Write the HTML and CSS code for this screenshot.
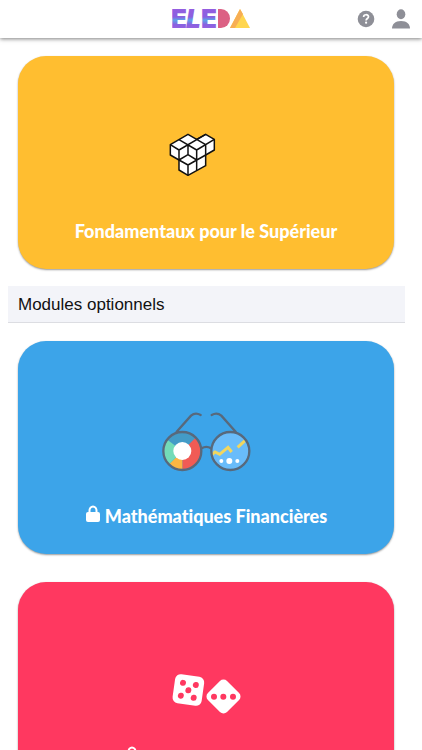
FILE: index.html
```html
<!DOCTYPE html>
<html lang="fr">

<head>
    <meta charset="UTF-8">
    <meta name="viewport" content="width=device-width, initial-scale=1.0">
    <title>Eleda</title>
    <link rel="stylesheet" href="styles.css">
</head>

<body>
    <header class="topbar">
        <a class="logo" href="#" aria-label="Eleda">
            <svg width="78" height="34" viewBox="0 -7 78 34">
                <defs>
                    <linearGradient id="violet" x1="0" y1="0" x2="0" y2="1">
                        <stop offset="0" stop-color="#9b5be0" />
                        <stop offset=".45" stop-color="#8a60e0" />
                        <stop offset=".55" stop-color="#5fa3e8" />
                        <stop offset=".7" stop-color="#8a60e0" />
                        <stop offset="1" stop-color="#a866e0" />
                    </linearGradient>
                </defs>
                <g class="logo-text" fill="url(#violet)">
                    <text x="-1" y="19">E</text>
                    <text x="14" y="19" font-style="italic">L</text>
                    <text x="29" y="19">E</text>
                </g>
                <path fill="#dc6184" d="M46 0h3a9 9.500 0 0 1 0 19h-3z" />
                <path fill="#ffd64f" d="M68 0l10 19H58z" />
                <path fill="#f7ae54" d="M68 0l3 5-8 14h-5z" />
            </svg>
        </a>
        <nav class="actions">
            <button type="button" aria-label="Aide">
                <svg width="18" height="18" viewBox="0 0 18 18">
                    <circle cx="9" cy="9" r="8.300" fill="#8e8f97" />
                    <path d="M6.600 7c0-3 4.900-3 4.900-.2 0 1.700-2.400 1.800-2.400 3.700" fill="none" stroke="#fff" stroke-width="1.700" />
                    <circle cx="9.100" cy="12.700" r="1.100" fill="#fff" />
                </svg>
            </button>
            <button type="button" aria-label="Profil">
                <svg width="18" height="20" viewBox="0 0 18 20">
                    <ellipse cx="9" cy="5.200" rx="4.300" ry="5" fill="#8e8f97" />
                    <path d="M0 19.500c0-4 3-7.500 9-7.500s9 3.500 9 7.500z" fill="#8e8f97" />
                </svg>
            </button>
        </nav>
    </header>

    <main>
        <a class="card yellow" href="#">
            <svg class="picture" viewBox="0 0 90 90">
                <g transform="translate(-6 9) scale(.3333)" stroke="#111" stroke-width="4.500" stroke-linejoin="round">
                    <path fill="#fff" d="M46 74L99 43l26 15 27-15 26 15v32l-26 15v32l-53 29-27-16v-30l-26-15z" />
                    <path fill="none" d="M46 74l26 16 80-47M72 59l53 31 53-32M125 58l27 16v31l-53 30M72 90v30l27-16V74M72 120l27 15v31M99 104l26 16v31M125 90v30" />
                </g>
            </svg>
            <h2>Fondamentaux pour le Supérieur</h2>
        </a>

        <h3 class="section">Modules optionnels</h3>

        <a class="card blue" href="#">
            <svg class="picture" viewBox="0 0 90 90">
                <g transform="translate(-11 4) scale(.3333)">
                    <!-- left lens: ring chart -->
                    <circle cx="97" cy="153" r="55" fill="#439bc7" />
                    <path fill="#f15b55" d="M97 153l39-39a55 55 0 0 1-39 94z" />
                    <path fill="#fbb643" d="M97 153v55a55 55 0 0 1-39-16z" />
                    <path fill="#73dbb8" d="M97 153l-39 39a55 55 0 0 1-5-72z" />
                    <circle cx="97" cy="153" r="27" fill="#fff" />
                    <!-- right lens: curve -->
                    <circle cx="241" cy="153" r="55" fill="#69bcfa" />
                    <path d="M187 163l8-7 14 7 25-21 11 14M263 142l22-20" fill="none" stroke="#f2d65e" stroke-width="9" />
                    <g fill="#fff">
                        <circle cx="214" cy="183" r="6" />
                        <circle cx="238" cy="183" r="9" />
                        <circle cx="262" cy="183" r="6" />
                    </g>
                    <g fill="none" stroke="#58697c" stroke-width="7" stroke-linecap="round">
                        <circle cx="97" cy="153" r="57" />
                        <circle cx="241" cy="153" r="57" />
                        <path d="M155 145q14-9 28 0M80 95l43-48q13-11 29-2M257 95l-43-48q-13-11-29-2" />
                    </g>
                </g>
            </svg>
            <h2>
                <svg class="lock" viewBox="0 0 16 18">
                    <path d="M4.500 8V5.500a3.500 4 0 0 1 7 0V8" fill="none" stroke="#fff" stroke-width="2" />
                    <rect x="1" y="7" width="14" height="10" rx="2" fill="#fff" />
                </svg>
                Mathématiques Financières
            </h2>
        </a>

        <a class="card red" href="#">
            <svg class="picture" viewBox="0 0 90 90">
                <g transform="translate(-6 23) scale(.3333)">
                    <g transform="rotate(8 100 91)">
                        <rect x="56" y="46" width="88" height="88" rx="17" fill="#fff" />
                        <g fill="#ff3860">
                            <circle cx="81" cy="71" r="9" />
                            <circle cx="120" cy="72" r="9" />
                            <circle cx="100" cy="91" r="9" />
                            <circle cx="80" cy="110" r="9" />
                            <circle cx="119" cy="111" r="9" />
                        </g>
                    </g>
                    <rect x="165" y="69" width="81" height="81" rx="15" fill="#fff" transform="rotate(45 205.500 109.500)" />
                    <g fill="#ff3860">
                        <circle cx="177" cy="110" r="9" />
                        <circle cx="205" cy="110" r="9" />
                        <circle cx="234" cy="110" r="9" />
                    </g>
                </g>
            </svg>
            <h2>
                <svg class="lock" viewBox="0 0 16 18">
                    <path d="M4.500 8V5.500a3.500 4 0 0 1 7 0V8" fill="none" stroke="#fff" stroke-width="2" />
                    <rect x="1" y="7" width="14" height="10" rx="2" fill="#fff" />
                </svg>
                Statistiques pures
            </h2>
        </a>
    </main>
</body>

</html>
```
FILE: styles.css
```css
* {
    box-sizing: border-box;
}

body {
    margin: 0;
    height: 100vh;
    display: flex;
    flex-direction: column;
    overflow: hidden;
    background: #fff;
    color: #111;
    font-family: "Liberation Sans", Arial, sans-serif;
}

.topbar {
    display: grid;
    grid-template-columns: 1fr auto 1fr;
    align-items: center;
    flex: none;
    height: 38px;
    padding: 0 12px;
    box-shadow: 0 1px 4px rgba(0, 0, 0, 0.5);
    z-index: 1;
}

.logo {
    grid-column: 2;
    display: flex;
}

.logo-text {
    font-family: Inter, sans-serif;
    font-size: 26px;
    font-weight: 900;
}

.actions {
    display: flex;
    align-items: center;
    justify-content: flex-end;
    gap: 17px;
}

.actions button {
    display: flex;
    padding: 0;
    border: none;
    background: none;
}

main {
    flex: 1;
    overflow-y: auto;
    scrollbar-width: none;
    padding: 18px 17px 18px 8px;
}

.card {
    display: flex;
    flex-direction: column;
    align-items: center;
    height: 213px;
    margin: 0 11px 28px 10px;
    padding-top: 55px;
    border-radius: 28px;
    box-shadow: 0 1px 2px rgba(0, 0, 0, 0.4);
    color: #fff;
    text-decoration: none;
}

.yellow {
    background: #ffbe30;
}

.blue {
    background: #3ca4e9;
}

.red {
    background: #ff3860;
}

.picture {
    width: 90px;
    height: 90px;
}

.card h2 {
    display: flex;
    align-items: center;
    gap: 4px;
    margin: 18px 0 0;
    font-family: Lato, sans-serif;
    font-size: 18px;
    font-weight: 900;
    line-height: 24px;
    white-space: nowrap;
    font-variant-ligatures: none;
}

.lock {
    width: 16px;
    height: 18px;
    margin-bottom: 5px;
}

.section {
    margin: -11px 0 18px;
    padding: 2px 10px 0;
    border-bottom: 1px solid #dcdde2;
    background: #f3f4f9;
    font-size: 17px;
    font-weight: 400;
    line-height: 34px;
}
```
